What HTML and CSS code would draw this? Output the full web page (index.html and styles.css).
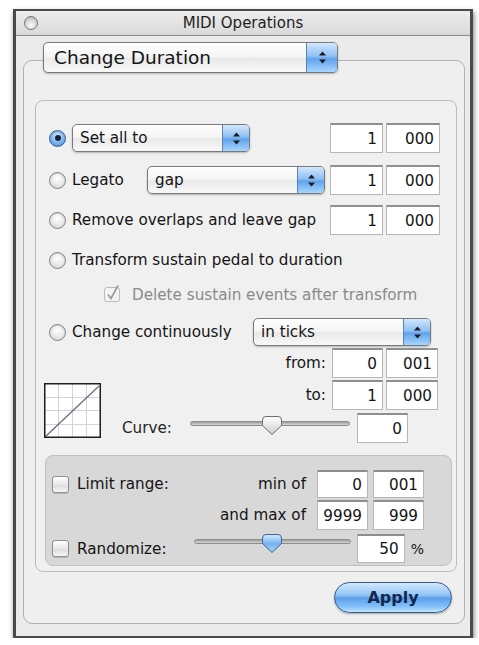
FILE: index.html
```html
<!DOCTYPE html>
<html lang="en">
<head>
<meta charset="utf-8">
<title>MIDI Operations</title>
<link rel="stylesheet" href="styles.css">
</head>
<body>
<div class="window">
  <div class="titlebar">
    <span class="close"></span>
    <span class="title">MIDI Operations</span>
    <span></span>
  </div>
  <div class="content">
    <div class="popup popup-main">
      <span class="popup-label">Change Duration</span>
      <span class="stepper"><svg width="9" height="15" viewBox="0 0 9 15"><path d="M4.5 1.5 L8 5.5 H1 Z M1 9.5 H8 L4.5 13.5 Z" fill="#1b1b1b"/></svg></span>
    </div>
    <div class="group">
      <div class="inner">
        <div class="row r1">
          <span class="radio on"></span>
          <div class="popup popup-sm popup-setall">
            <span class="popup-label">Set all to</span>
            <span class="stepper"><svg width="9" height="15" viewBox="0 0 9 15"><path d="M4.5 1.5 L8 5.5 H1 Z M1 9.5 H8 L4.5 13.5 Z" fill="#1b1b1b"/></svg></span>
          </div>
          <div class="fields"><span class="field fa">1</span><span class="field fb">000</span></div>
        </div>
        <div class="row r2">
          <span class="radio"></span>
          <span class="label lbl-legato">Legato</span>
          <div class="popup popup-sm">
            <span class="popup-label">gap</span>
            <span class="stepper"><svg width="9" height="15" viewBox="0 0 9 15"><path d="M4.5 1.5 L8 5.5 H1 Z M1 9.5 H8 L4.5 13.5 Z" fill="#1b1b1b"/></svg></span>
          </div>
          <div class="fields"><span class="field fa">1</span><span class="field fb">000</span></div>
        </div>
        <div class="row r3">
          <span class="radio"></span>
          <span class="label">Remove overlaps and leave gap</span>
          <div class="fields"><span class="field fa">1</span><span class="field fb">000</span></div>
        </div>
        <div class="row r4">
          <span class="radio"></span>
          <span class="label">Transform sustain pedal to duration</span>
        </div>
        <div class="row r5">
          <svg class="check-dis" width="17" height="19" viewBox="0 0 17 19"><rect x="0.5" y="3.5" width="15" height="14" rx="2.5" fill="#f3f3f3" stroke="#bcbcbc"/><path d="M4 10.5 L7 14.5 L14 1.5" fill="none" stroke="#9a9a9a" stroke-width="1.7"/></svg>
          <span class="label dim">Delete sustain events after transform</span>
        </div>
        <div class="row r6">
          <span class="radio"></span>
          <span class="label lbl-cc">Change continuously</span>
          <div class="popup popup-sm">
            <span class="popup-label">in ticks</span>
            <span class="stepper"><svg width="9" height="15" viewBox="0 0 9 15"><path d="M4.5 1.5 L8 5.5 H1 Z M1 9.5 H8 L4.5 13.5 Z" fill="#1b1b1b"/></svg></span>
          </div>
        </div>
        <div class="sub">
          <svg class="graph" width="57" height="55" viewBox="0 0 57 55">
            <rect x="0" y="0" width="57" height="55" fill="#ffffff"/>
            <g stroke="#d4d4d4" stroke-width="1">
              <path d="M14.5 1 V54 M28.5 1 V54 M42.5 1 V54 M1 14.5 H56 M1 27.5 H56 M1 41.5 H56"/>
            </g>
            <path d="M1.5 53.5 L55 3" stroke="#6d6b86" stroke-width="1.3" fill="none"/>
            <rect x="0.75" y="0.75" width="55.5" height="53.5" fill="none" stroke="#1e1e1e" stroke-width="1.5"/>
          </svg>
          <div class="subcol">
            <div class="vrow vrow-from">
              <span class="vlabel">from:</span>
              <div class="fields-n"><span class="field fn1">0</span><span class="field fn2">001</span></div>
            </div>
            <div class="vrow vrow-to">
              <span class="vlabel">to:</span>
              <div class="fields-n"><span class="field fn1">1</span><span class="field fn2">000</span></div>
            </div>
            <div class="curve-row">
              <span class="curve-label">Curve:</span>
              <div class="slider slider-curve">
                <span class="track"></span>
                <svg class="thumb thumb-curve" width="22" height="21" viewBox="0 0 22 21"><defs><linearGradient id="tg" x1="0" y1="0" x2="0" y2="1"><stop offset="0" stop-color="#ffffff"/><stop offset="1" stop-color="#cfcfcf"/></linearGradient></defs><path d="M5 1.5 H17 Q20.5 1.5 20.5 5 V10.5 L11 19.5 L1.5 10.5 V5 Q1.5 1.5 5 1.5 Z" fill="url(#tg)" stroke="#6c6c6c" stroke-width="1"/></svg>
              </div>
              <span class="field fc">0</span>
            </div>
          </div>
        </div>
        <div class="range">
          <div class="rrow rrow-limit">
            <span class="check"></span>
            <span class="rlabel">Limit range:</span>
            <div class="mm">
              <span class="vlabel">min of</span>
              <div class="fields-r"><span class="field fr">0</span><span class="field fr">001</span></div>
            </div>
          </div>
          <div class="rrow rrow-max">
            <div class="mm">
              <span class="vlabel">and max of</span>
              <div class="fields-r"><span class="field fr">9999</span><span class="field fr">999</span></div>
            </div>
          </div>
          <div class="rrow rrow-rand">
            <span class="check"></span>
            <span class="rlabel lbl-rand">Randomize:</span>
            <div class="slider slider-rand">
              <span class="track"></span>
              <svg class="thumb thumb-rand" width="22" height="21" viewBox="0 0 22 21"><defs><linearGradient id="tb" x1="0" y1="0" x2="0" y2="1"><stop offset="0" stop-color="#d8ecff"/><stop offset="0.5" stop-color="#77b2f0"/><stop offset="1" stop-color="#a9d6fb"/></linearGradient></defs><path d="M5 1.5 H17 Q20.5 1.5 20.5 5 V10.5 L11 19.5 L1.5 10.5 V5 Q1.5 1.5 5 1.5 Z" fill="url(#tb)" stroke="#3f6298" stroke-width="1"/></svg>
            </div>
            <span class="field fr fpct">50</span>
            <span class="pct">%</span>
          </div>
        </div>
      </div>
      <div class="actions"><button class="apply">Apply</button></div>
    </div>
  </div>
</div>
</body>
</html>
```

FILE: styles.css
```css
* { box-sizing: border-box; }
html, body { margin: 0; padding: 0; }
body {
  background: #ffffff;
  font-family: "DejaVu Sans", "Liberation Sans", sans-serif;
  color: #141414;
  font-size: 15.2px;
}
.window {
  margin: 9px 0 0 13px;
  width: 460px;
  height: 629px;
  border: 2px solid #4a4a4a;
  border-left-width: 3px;
  border-right-width: 3px;
  background: #ebebeb;
  box-shadow: 1px 3px 5px rgba(0,0,0,0.5);
  display: flex;
  flex-direction: column;
}
.titlebar {
  height: 25px;
  flex: none;
  display: grid;
  grid-template-columns: 1fr auto 1fr;
  align-items: center;
  background: linear-gradient(#ededed, #d9d9d9);
  border-bottom: 1px solid #8c8c8c;
}
.close {
  width: 14px;
  height: 14px;
  margin-left: 8px;
  border-radius: 50%;
  border: 1px solid #777777;
  background: radial-gradient(circle at 50% 70%, #fbfbfb, #d2d2d2 60%, #a8a8a8);
}
.title { font-size: 15px; color: #1e1e1e; white-space: nowrap; }
.content { flex: 1; display: flex; flex-direction: column; }

.popup {
  display: flex;
  align-items: stretch;
  border: 1px solid #7a7a7a;
  border-radius: 5px;
  background: linear-gradient(#fefefe, #f4f4f4 48%, #e9e9e9 52%, #f8f8f8);
  box-shadow: 0 1px 2px rgba(0,0,0,0.25);
  overflow: hidden;
}
.popup-label {
  flex: 1;
  display: flex;
  align-items: center;
  padding-left: 7px;
  white-space: nowrap;
}
.stepper {
  width: 27px;
  flex: none;
  display: flex;
  align-items: center;
  justify-content: center;
  border-left: 1px solid #5e80ae;
  background: linear-gradient(#d2e7fd, #8fc0f4 45%, #62a2ee 55%, #a6d6fe);
}
.popup-main {
  margin: 6px 0 0 27px;
  width: 295px;
  height: 31px;
  flex: none;
  position: relative;
  z-index: 1;
  font-size: 18.5px;
}
.popup-main .popup-label { padding-left: 10px; }
.popup-main .stepper { width: 31px; }

.group {
  margin: -13px 0 0 7px;
  width: 442px;
  height: 564px;
  border: 1px solid #b1b1b1;
  border-radius: 9px;
  padding: 39px 7px 0 11px;
  background: #efefef;
}
.inner {
  height: 472px;
  border: 1px solid #bcbcbc;
  border-radius: 8px;
  padding-top: 22px;
  background: #f0f0f0;
}
.row {
  display: flex;
  align-items: center;
  padding: 0 16px 0 13px;
}
.r1 { height: 30px; }
.r2 { height: 30px; margin-top: 12px; }
.r3 { height: 30px; margin-top: 10px; }
.r4 { height: 26px; margin-top: 12px; }
.r5 { height: 24px; margin-top: 10px; padding-left: 68px; }
.r6 { height: 28px; margin-top: 11px; }

.radio {
  width: 17px;
  height: 17px;
  flex: none;
  border-radius: 50%;
  border: 1px solid #858585;
  background: radial-gradient(circle at 50% 35%, #ffffff, #e6e6e6 60%, #c4c4c4);
  box-shadow: inset 0 1px 1px rgba(0,0,0,0.15);
  display: flex;
  align-items: center;
  justify-content: center;
}
.radio.on {
  border-color: #3d5f98;
  background: radial-gradient(circle at 50% 35%, #d9ecff, #7bb3f0 55%, #3f80d6);
}
.radio.on::after {
  content: "";
  width: 6px;
  height: 6px;
  border-radius: 50%;
  background: #15223a;
}
.label { margin-left: 6px; white-space: nowrap; }
.lbl-legato { width: 75px; flex: none; }
.lbl-cc { width: 181px; flex: none; }
.dim { color: #8a8a8a; margin-left: 11px; }
.check-dis { flex: none; margin-top: -4px; }

.popup-sm { width: 178px; height: 28px; flex: none; }
.popup-setall { margin-left: 6px; }

.fields { margin-left: auto; display: flex; gap: 3px; }
.field {
  height: 30px;
  background: #ffffff;
  border: 1px solid #b6b6b6;
  border-top: 2px solid #8e8e8e;
  display: flex;
  align-items: center;
  justify-content: flex-end;
  padding-right: 5px;
  white-space: nowrap;
}
.fa { width: 53px; }
.fb { width: 54px; }

.sub {
  display: flex;
  align-items: flex-end;
  padding: 0 16px 0 8px;
}
.graph { flex: none; margin-bottom: 5px; }
.subcol { flex: 1; display: flex; flex-direction: column; }
.vrow {
  height: 30px;
  display: flex;
  align-items: center;
  justify-content: flex-end;
  padding-right: 2px;
}
.vrow-from { margin-top: 2px; }
.vrow-to { margin-top: 2px; }
.vlabel { margin-right: 6px; white-space: nowrap; }
.fields-n { display: flex; gap: 3px; }
.fn1 { width: 51px; }
.fn2 { width: 52px; }
.curve-row {
  height: 30px;
  margin-top: 3px;
  display: flex;
  align-items: center;
}
.curve-label { margin-left: 21px; width: 68px; flex: none; color: #262626; }
.slider {
  position: relative;
  height: 22px;
  display: flex;
  align-items: center;
  flex: none;
}
.slider-curve { width: 160px; margin-top: -4px; }
.track {
  width: 100%;
  height: 5px;
  border-radius: 3px;
  border: 1px solid #8c8c8c;
  background: linear-gradient(#9d9d9d, #d6d6d6);
  margin-top: -5px;
}
.thumb { position: absolute; top: 0; }
.thumb-curve { left: 71px; }
.thumb-rand { left: 67px; }
.fc { width: 51px; margin-left: 7px; }

.range {
  margin: 12px 4px 0 9px;
  height: 111px;
  background: #d8d8d8;
  border: 1px solid #c0c0c0;
  border-radius: 8px;
  padding: 14px 27px 0 6px;
}
.rrow { display: flex; align-items: center; }
.rrow-limit { height: 28px; }
.rrow-max { height: 30px; margin-top: 2px; }
.rrow-rand { height: 29px; margin-top: 4px; }
.check {
  width: 17px;
  height: 17px;
  flex: none;
  border-radius: 3px;
  border: 1px solid #8e8e8e;
  background: linear-gradient(#ffffff, #e8e8e8 50%, #dcdcdc 52%, #f4f4f4);
  box-shadow: 0 1px 1px rgba(0,0,0,0.15);
}
.rlabel { margin-left: 8px; white-space: nowrap; }
.lbl-rand { width: 117px; flex: none; }
.mm { margin-left: auto; display: flex; align-items: center; }
.mm .vlabel { margin-right: 11px; }
.fields-r { display: flex; gap: 5px; }
.fr { width: 51px; height: 28px; }
.rrow-max .fr { height: 30px; }
.slider-rand { width: 157px; margin-top: -10px; }
.fpct { margin-left: 6px; height: 29px; }
.pct { margin-left: 6px; font-size: 14px; }

.actions {
  display: flex;
  justify-content: flex-end;
  margin-top: 10px;
  padding-right: 5px;
}
.apply {
  width: 118px;
  height: 31px;
  border-radius: 16px;
  border: 1px solid #3a5a8c;
  background: linear-gradient(#d3e9fe 0%, #91c4f5 42%, #5d9fea 52%, #7fbff9 80%, #c2e5ff 100%);
  box-shadow: 0 1px 2px rgba(0,0,0,0.3);
  color: #14264e;
  font-family: "DejaVu Sans", "Liberation Sans", sans-serif;
  font-weight: bold;
  font-size: 16px;
  padding: 0;
}
```
